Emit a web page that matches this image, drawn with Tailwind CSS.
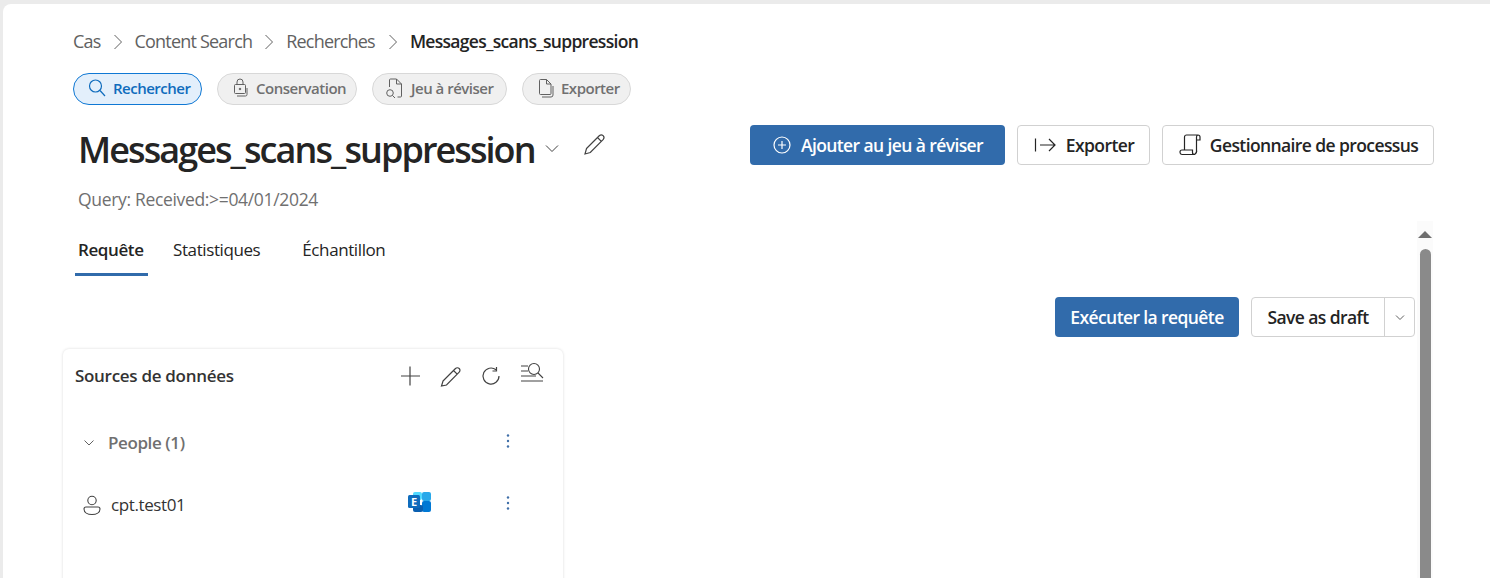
<!doctype html>
<html lang="fr">
<head>
<meta charset="utf-8">
<script src="https://cdn.jsdelivr.net/npm/@tailwindcss/browser@4"></script>
<title>Messages_scans_suppression</title>
</head>
<body class="m-0 h-[578px] w-[1490px] overflow-hidden bg-[#ebebeb] font-['Open_Sans','Noto_Sans',sans-serif] text-[#242424]">
<div class="ml-[3px] mt-[4px] h-[574px] w-[1487px] overflow-hidden rounded-tl-lg bg-white pl-[60px]">
  <nav class="flex h-[27px] items-center pl-[10px] mt-[24px] text-[18px] tracking-[-0.8px] text-[#616161]">
    <span>Cas</span>
    <svg class="mx-[9px] h-4 w-4" viewBox="0 0 16 16" fill="none" stroke="#616161" stroke-width="1"><path d="M4.500 1l7 7-7 7"/></svg>
    <span>Content Search</span>
    <svg class="mx-[9px] h-4 w-4" viewBox="0 0 16 16" fill="none" stroke="#616161" stroke-width="1"><path d="M4.500 1l7 7-7 7"/></svg>
    <span>Recherches</span>
    <svg class="mx-[9px] h-4 w-4 ml-[10px]" viewBox="0 0 16 16" fill="none" stroke="#616161" stroke-width="1"><path d="M4.500 1l7 7-7 7"/></svg>
    <span class="text-[17.500px] font-semibold text-[#242424] tracking-[-0.7px]">Messages_scans_suppression</span>
  </nav>

  <div class="mt-[18px] flex h-[32px] items-center gap-[15px] pl-[10px] text-[15px] font-semibold tracking-[-0.5px] text-[#707070]">
    <div class="flex h-[32px] w-[129px] items-center rounded-full border border-[#0f78d4] bg-[#e3effb] pb-[2px] pl-[13px] text-[#0f6cbd]">
      <svg class="mr-[6px] h-[20px] w-[20px] shrink-0" viewBox="0 0 20 20" fill="none" stroke="#0f6cbd" stroke-width="1.200"><circle cx="8.500" cy="8" r="6"/><path d="M13 12.500l5 5.500"/></svg>
      <span>Rechercher</span>
    </div>
    <div class="flex h-[32px] w-[140px] items-center rounded-full border border-[#d8d8d8] bg-[#f0f0f0] pb-[2px] pl-[13px]">
      <svg class="mr-[5px] h-[20px] w-[20px] shrink-0" viewBox="0 0 20 20" fill="none" stroke="#616161" stroke-width="1"><path d="M4.500 6.500h9a1 1 0 0 1 1 1v7a1 1 0 0 1-1 1h-9a1 1 0 0 1-1-1v-7a1 1 0 0 1 1-1zM6 6.500V4a3 3 0 0 1 6 0v2.500M16 10v6.500a1.500 1.500 0 0 1-1.500 1.500H6"/><circle cx="9" cy="11" r=".8" fill="#616161"/></svg>
      <span>Conservation</span>
    </div>
    <div class="flex h-[32px] w-[135px] items-center rounded-full border border-[#d8d8d8] bg-[#f0f0f0] pb-[2px] pl-[12px]">
      <svg class="mr-[6px] h-[22px] w-[20px] shrink-0" viewBox="0 0 20 22" fill="none" stroke="#616161" stroke-width="1"><path d="M4.500 10V3a1 1 0 0 1 1-1h6l5 5v12a1 1 0 0 1-1 1h-3M11.500 2v5h5"/><circle cx="5" cy="16" r="3.300"/><path d="M7.500 18.500l2.500 2.500"/></svg>
      <span>Jeu à réviser</span>
    </div>
    <div class="flex h-[32px] w-[109px] items-center rounded-full border border-[#d8d8d8] bg-[#f0f0f0] pb-[2px] pl-[13px]">
      <svg class="mr-[5px] h-[20px] w-[20px] shrink-0" viewBox="0 0 20 20" fill="none" stroke="#616161" stroke-width="1"><path d="M3.500 2.500a1 1 0 0 1 1-1h6l4.500 4.500v9.500a1 1 0 0 1-1 1h-9.500a1 1 0 0 1-1-1zM10.500 1.500v4.500h4.500M17 8v9a2 2 0 0 1-2 2H6"/></svg>
      <span>Exporter</span>
    </div>
  </div>

  <div class="mt-[20px] flex items-start justify-between pr-[56px]">
    <div class="mt-[5px] flex h-[40px] items-center pl-[15px]">
      <h1 class="text-[36px] font-semibold leading-[52px] tracking-[-1.93px] text-[#242424]">Messages_scans_suppression</h1>
      <svg class="ml-[9px] mt-[-4px] h-4 w-4" viewBox="0 0 16 16" fill="none" stroke="#424242" stroke-width="1"><path d="M2 5.500l6 6 6-6"/></svg>
      <svg class="ml-[23px] mt-[-12px] h-[24px] w-[24px]" viewBox="0 0 24 24" fill="none" stroke="#424242" stroke-width="1.200"><path d="M3.500 16.500L16.500 3.500a2.700 2.700 0 0 1 3.800 3.800L7.300 20.500 2 22zM14.500 5.500l3.800 3.800"/></svg>
    </div>
    <div class="flex gap-[12px] text-[17.500px] font-semibold tracking-[-0.6px]">
      <button class="flex h-[40px] w-[255px] items-center justify-center rounded-[4px] bg-[#316bab] text-white">
        <svg class="mr-[9px] h-[20px] w-[20px]" viewBox="0 0 20 20" fill="none" stroke="#fff" stroke-width="1.200"><circle cx="10" cy="10" r="8"/><path d="M10 6v8M6 10h8"/></svg>
        Ajouter au jeu à réviser
      </button>
      <button class="flex h-[40px] w-[133px] items-center justify-center rounded-[4px] border border-[#d1d1d1] bg-white">
        <svg class="mr-[9px] h-[24px] w-[24px]" viewBox="0 0 24 24" fill="none" stroke="#242424" stroke-width="1.200"><path d="M2.500 5.500v13M7 12h15M16 6l6 6-6 6"/></svg>
        Exporter
      </button>
      <button class="flex h-[40px] w-[272px] items-center justify-center rounded-[4px] border border-[#d1d1d1] bg-white">
        <svg class="mr-[8px] h-[24px] w-[24px]" viewBox="0 0 24 24" fill="none" stroke="#242424" stroke-width="1.200"><path d="M6.500 17V4a2 2 0 0 1 2-2H20a2 2 0 0 1 2 2v3h-3.500V4M20 2a2 2 0 0 0-1.500 2v13a4 4 0 0 1-2 4.500H4a2.200 2.200 0 0 1-2-2.200V19a2 2 0 0 1 2-2h10.500v2.500a2 2 0 0 0 2 2"/></svg>
        Gestionnaire de processus
      </button>
    </div>
  </div>

  <p class="ml-[15px] mt-[17px] h-[24px] text-[17.500px] leading-[24px] tracking-[-0.33px] text-[#707070]">Query: Received:&gt;=04/01/2024</p>

  <div class="flex h-[401px] items-start pr-[57px]">
    <div class="min-w-0 flex-1">
      <div class="mt-[22px] flex h-[43px] items-start pl-[12px] text-[17px] tracking-[-0.4px]">
        <div class="h-[43px] w-[73px] border-b-[3px] border-[#316bab] pl-[3px] pt-[4px] font-semibold text-[#242424]">Requête</div>
        <div class="ml-[25px] pt-[4px]">Statistiques</div>
        <div class="ml-[42px] pt-[4px]">Échantillon</div>
      </div>
      <div class="mt-[21px] flex h-[40px] justify-end gap-[12px] text-[17.500px] font-semibold tracking-[-0.6px]">
        <button class="h-[40px] w-[184px] rounded-[4px] bg-[#316bab] text-white">Exécuter la requête</button>
        <div class="flex h-[40px] w-[164px] rounded-[4px] border border-[#d1d1d1] bg-white">
          <span class="flex w-[133px] items-center justify-center border-r border-[#d1d1d1]">Save as draft</span>
          <span class="flex flex-1 items-center justify-center">
            <svg class="h-3 w-3" viewBox="0 0 12 12" fill="none" stroke="#616161" stroke-width="1"><path d="M2 4.500l4 4 4-4"/></svg>
          </span>
        </div>
      </div>
      <section class="mt-[12px] h-[260px] w-[500px] rounded-t-[6px] bg-white shadow-[0_0_3px_rgba(0,0,0,0.15)]">
        <div class="flex h-[54px] items-center pl-[12px] pr-[21px]">
          <h2 class="flex-1 text-[17px] font-semibold tracking-[-0.3px] text-[#333]">Sources de données</h2>
          <svg class="mr-[18px] h-[22px] w-[22px]" viewBox="0 0 22 22" fill="none" stroke="#424242" stroke-width="1.200"><path d="M10 1.500v19M1 11h19"/></svg>
          <svg class="mr-[18px] h-[22px] w-[22px]" viewBox="0 0 22 22" fill="none" stroke="#424242" stroke-width="1.200"><path d="M3 16L15.500 3.500a2.600 2.600 0 0 1 3.700 3.700L6.500 20 1.500 21zM13.500 5.500l3.700 3.700"/></svg>
          <svg class="mr-[18px] h-[22px] w-[22px]" viewBox="0 0 22 22" fill="none" stroke="#424242" stroke-width="1.200"><path d="M16 4.800A8 8 0 1 0 19 11M16.500 2v4h-4"/></svg>
          <svg class="h-[22px] w-[22px] overflow-visible" viewBox="0 0 22 22" fill="none" stroke="#424242" stroke-width="1.100"><path d="M1 1h7M1 6h7M1 11h15M1 16h22"/><circle cx="14" cy="4" r="5.500"/><path d="M18 8l5 5"/></svg>
        </div>
        <div class="mt-[25px] flex h-[30px] items-center pl-[20px] pr-[51px] text-[#707070]">
          <svg class="mr-[13px] h-3 w-3" viewBox="0 0 12 12" fill="none" stroke="#616161" stroke-width="1"><path d="M1.500 3.500l4.500 4.500 4.500-4.500"/></svg>
          <span class="flex-1 text-[17px] font-semibold tracking-[-0.4px]">People (1)</span>
          <svg class="mb-[4px] h-[16px] w-[8px]" viewBox="0 0 8 16" fill="#3f6fa8"><circle cx="4" cy="2.500" r="1.200"/><circle cx="4" cy="8" r="1.200"/><circle cx="4" cy="13.500" r="1.200"/></svg>
        </div>
        <div class="mt-[31px] flex h-[32px] items-center pl-[18px] pr-[51px]">
          <svg class="mr-[8px] h-[22px] w-[22px]" viewBox="0 0 22 22" fill="none" stroke="#424242" stroke-width="1.100"><circle cx="11" cy="6.500" r="4.200"/><path d="M3 15a2 2 0 0 1 2-2h12a2 2 0 0 1 2 2c0 3.500-3.500 5.500-8 5.500S3 18.500 3 15z"/></svg>
          <span class="w-[297px] text-[17px] tracking-[-0.4px] text-[#333]">cpt.test01</span>
          <svg class="mb-[6px] h-[22px] w-[24px]" viewBox="0 0 24 22"><rect x="5" y="1" width="9" height="8" rx="2" fill="#50d9ff"/><rect x="14" y="1" width="9" height="9" rx="2" fill="#28a8ea"/><rect x="14" y="10" width="9" height="11" rx="2" fill="#0078d4"/><rect x="5" y="14" width="10" height="7" rx="2" fill="#0a5fb0"/><rect x="0" y="4" width="12" height="13" rx="1.500" fill="#0f6cbd"/><text x="6" y="14.500" text-anchor="middle" font-size="11" font-weight="700" fill="#fff" font-family="Open Sans, sans-serif">E</text></svg>
          <span class="flex-1"></span>
          <svg class="mb-[4px] h-[16px] w-[8px]" viewBox="0 0 8 16" fill="#3f6fa8"><circle cx="4" cy="2.500" r="1.200"/><circle cx="4" cy="8" r="1.200"/><circle cx="4" cy="13.500" r="1.200"/></svg>
        </div>
      </section>
    </div>
    <div class="ml-[2px] mt-[10px] flex h-[391px] w-[16px] shrink-0 flex-col items-center bg-[#fbfbfb]">
      <svg class="mt-[10px] h-[7px] w-[14px]" viewBox="0 0 14 7" fill="#6f6f6f"><path d="M7 0l7 7H0z"/></svg>
      <div class="mt-[11px] w-[11px] flex-1 rounded-t-full bg-[#8a8a8a]"></div>
    </div>
  </div>
</div>
</body>
</html>
